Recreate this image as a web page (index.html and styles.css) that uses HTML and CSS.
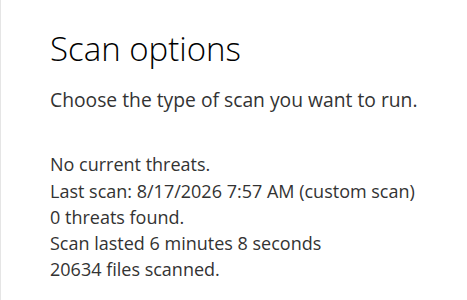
FILE: index.html
```html
<!DOCTYPE html>
<html lang="en">
<head>
<meta charset="utf-8">
<title>Scan options</title>
<link rel="stylesheet" href="styles.css">
</head>
<body>
<main class="page">
  <h1 class="title">Scan options</h1>
  <p class="subtitle">Choose the type of scan you want to run.</p>
  <section class="status">
    <p class="status-head">No current threats.</p>
    <ul class="details">
      <li>Last scan: 8/17/2026 7:57 AM (custom scan)</li>
      <li>0 threats found.</li>
      <li>Scan lasted 6 minutes 8 seconds</li>
      <li>20634 files scanned.</li>
    </ul>
  </section>
</main>
</body>
</html>
```

FILE: styles.css
```css
html, body {
  margin: 0;
  padding: 0;
  background: #ffffff;
  height: 100%;
}
body {
  font-family: "Open Sans", "Noto Sans", sans-serif;
  color: #333333;
}
.page {
  box-sizing: border-box;
  min-height: 100%;
  border-left: 1px solid #e5e5e5;
  padding: 27px 0 0 49px;
}
.title {
  margin: 0;
  font-size: 33px;
  font-weight: 300;
  line-height: 44px;
  color: #000000;
}
.subtitle {
  margin: 16px 0 0;
  font-size: 19.3px;
  line-height: 26px;
}
.status {
  margin-top: 37px;
}
.status-head {
  margin: 0;
  font-size: 18px;
  line-height: 28px;
}
.details {
  list-style: none;
  margin: 0;
  padding: 0;
  font-size: 18px;
  line-height: 26px;
}
```
